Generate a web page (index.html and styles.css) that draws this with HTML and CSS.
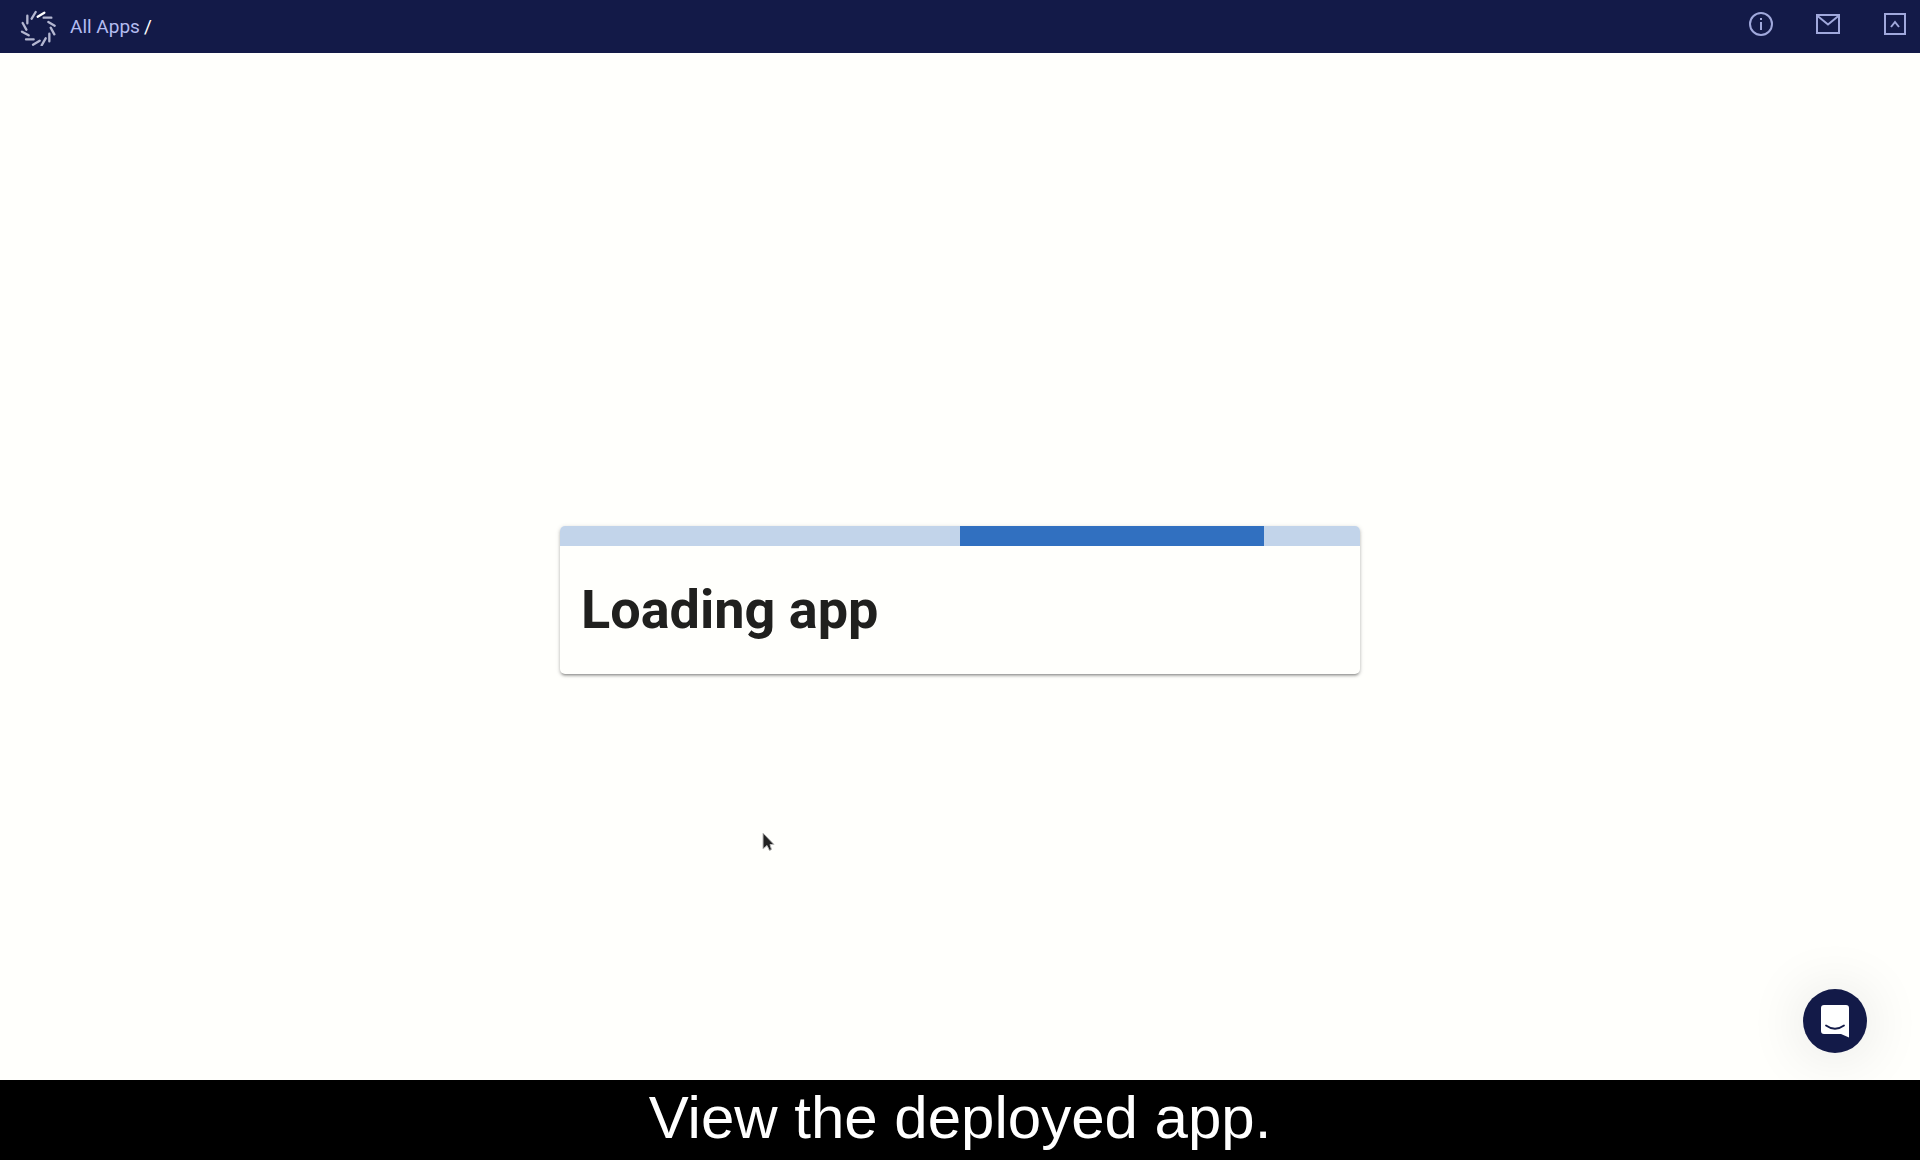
FILE: index.html
```html
<!DOCTYPE html>
<html lang="en">
<head>
<meta charset="utf-8">
<title>Loading app</title>
<meta name="viewport" content="width=device-width, initial-scale=1">
<link rel="stylesheet" href="styles.css">
</head>
<body>
<header class="topbar">
  <nav class="breadcrumb" aria-label="Breadcrumb">
    <a class="logo" href="#" aria-label="Home">
      <svg viewBox="60 30 108 108" width="36" height="36" fill="none" stroke="#b3b6d0" stroke-width="7" stroke-linecap="round">
        <path d="M131 53h23M145 66l19 11M152 83l11 20M148 101v23M137 115l-12 21M119 122l-20 12M101 118H78M86 106l-20-11M79 89L68 69M82 70V47M95 56l12-20"/>
        <path stroke="#fff" d="M113 50l20-12"/>
      </svg>
    </a>
    <a class="crumb" href="#">All Apps</a>
    <span class="slash">/</span>
  </nav>
  <div class="actions">
    <button class="action" type="button" aria-label="Information">
      <svg viewBox="0 0 24 24" width="24" height="24" fill="none" stroke="currentColor" stroke-width="2"><circle cx="12" cy="12" r="11"/><path d="M12 10v8M12 6v2"/></svg>
    </button>
    <button class="action" type="button" aria-label="Messages">
      <svg viewBox="0 0 24 24" width="24" height="24" fill="none" stroke="currentColor" stroke-width="2"><path d="M1 3h22v18H1zM1 3.500l11 9 11-9"/></svg>
    </button>
    <button class="action" type="button" aria-label="Collapse">
      <svg viewBox="0 0 24 24" width="24" height="24" fill="none" stroke="currentColor" stroke-width="2"><path d="M2 2h20v20H2zM8 15l4-5 4 5"/></svg>
    </button>
  </div>
</header>
<main class="stage">
  <section class="card">
    <div class="progress" role="progressbar" aria-label="Loading app"><div class="progress-bar"></div></div>
    <h1 class="title">Loading app</h1>
  </section>
  <svg class="pointer" viewBox="0 0 14 22" width="14" height="22"><path d="M1 1v16l4-3.500 2.500 5 2-1L8 12.500h4z" fill="#222" stroke="#bbb" stroke-width="1"/></svg>
  <button class="chat" type="button" aria-label="Open chat">
    <svg viewBox="0 0 28 33" width="28" height="33"><path fill="#fff" d="M3 0h22a3 3 0 0 1 3 3v29.500L20 29H3a3 3 0 0 1-3-3V3a3 3 0 0 1 3-3z"/><path d="M5 20.500q9 6.500 18 0" fill="none" stroke="#131a48" stroke-width="1.800" stroke-linecap="round"/></svg>
  </button>
</main>
<footer class="caption">View the deployed app.</footer>
</body>
</html>
```
FILE: styles.css
```css
* {
  box-sizing: border-box;
}

body {
  display: flex;
  flex-direction: column;
  min-height: 100vh;
  margin: 0;
  background: #fffffc;
  color: #20201e;
  font-family: Roboto, sans-serif;
}

.topbar {
  display: flex;
  justify-content: space-between;
  min-height: 53px;
  padding: 0 13px 0 20px;
  background: #131a48;
}

.breadcrumb {
  display: flex;
  align-items: center;
  font-size: 19px;
  line-height: 24px;
}

.logo {
  display: flex;
  margin-right: 14px;
  padding-top: 3px;
}

.crumb {
  margin-right: 4px;
  color: #b3bcf0;
  text-decoration: none;
}

.slash {
  color: #fff;
}

.actions {
  display: flex;
  align-items: center;
  gap: 43px;
  padding-bottom: 5px;
}

.action {
  display: flex;
  padding: 0;
  border: 0;
  background: none;
  color: #a0a8dc;
  cursor: pointer;
}

.stage {
  position: relative;
  display: flex;
  flex: 1;
  align-items: center;
  justify-content: center;
  padding: 66px 24px 0;
}

.card {
  width: 100%;
  max-width: 800px;
  overflow: hidden;
  border-radius: 5px;
  background: #fffffc;
  box-shadow: 0 3px 2px -2px rgba(0, 0, 0, 0.2), 0 2px 3px rgba(0, 0, 0, 0.2), 0 1px 5px rgba(0, 0, 0, 0.14);
}

.progress {
  height: 20px;
  background: #c2d4ea;
}

.progress-bar {
  width: 38%;
  height: 100%;
  margin-left: 50%;
  background: #3170c0;
}

.title {
  margin: 0;
  padding: 32px 21px;
  font-size: 54px;
  font-weight: 700;
  line-height: 64px;
}

.pointer {
  position: absolute;
  top: 779px;
  left: 762px;
}

.chat {
  position: absolute;
  right: 53px;
  bottom: 27px;
  display: flex;
  align-items: center;
  justify-content: center;
  width: 64px;
  height: 64px;
  padding: 0;
  border: 0;
  border-radius: 50%;
  background: #131a48;
  box-shadow: 0 2px 60px rgba(0, 0, 0, 0.12);
  cursor: pointer;
}

.caption {
  position: relative;
  padding: 0 24px 4px;
  background: #000;
  color: #fff;
  font-family: "Liberation Sans", Arial, sans-serif;
  font-size: 60px;
  line-height: 76px;
  text-align: center;
}
```
